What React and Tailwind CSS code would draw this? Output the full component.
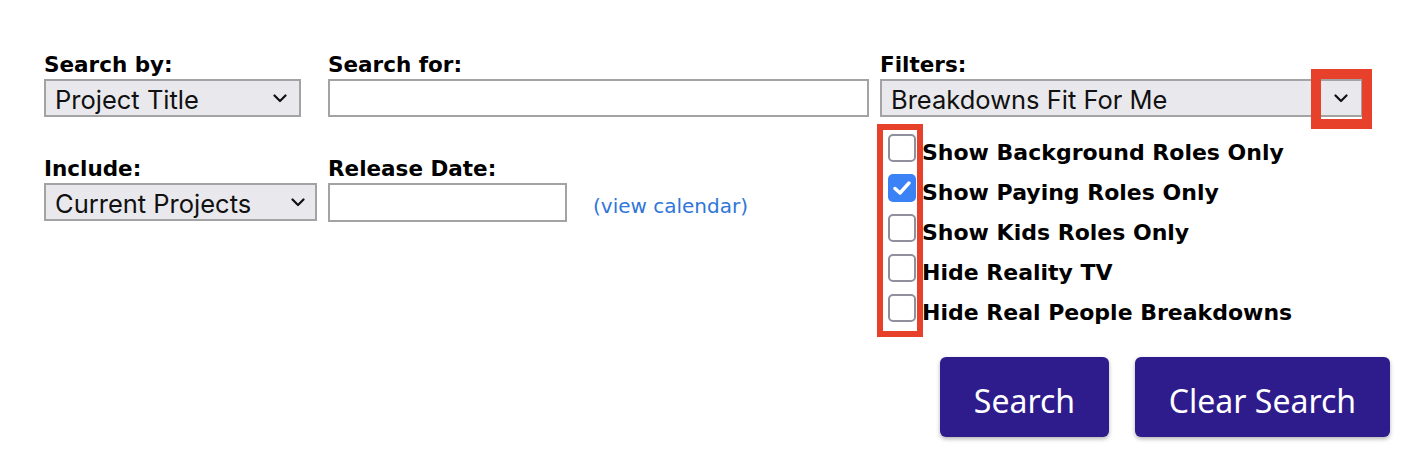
import { useState } from 'react'

const labelFont = "font-['DejaVu_Sans',Verdana,sans-serif]"

function Chevron() {
  return (
    <svg width="14" height="9" viewBox="0 0 14 9" className="shrink-0">
      <polyline points="1.5,1.5 7,7 12.5,1.5" fill="none" stroke="#111" strokeWidth="2.2" strokeLinecap="round" strokeLinejoin="round" />
    </svg>
  )
}

function FakeSelect({ value, width, pr = 'pr-[11px]' }) {
  return (
    <div
      className={`h-[38px] border-2 border-[#a3a3a3] bg-[#e9e9ed] flex items-center justify-between pl-[9px] ${pr} font-['Inter',sans-serif] text-[25.5px] text-[#111] ${width}`}
    >
      <span className="leading-none pt-[3px]">{value}</span>
      <Chevron />
    </div>
  )
}

function Label({ children }) {
  return (
    <div className={`${labelFont} font-bold text-[21.5px] leading-[24px] text-black mb-[2px]`}>
      {children}
    </div>
  )
}

const filters = [
  'Show Background Roles Only',
  'Show Paying Roles Only',
  'Show Kids Roles Only',
  'Hide Reality TV',
  'Hide Real People Breakdowns',
]

export default function App() {
  const [checked, setChecked] = useState([false, true, false, false, false])

  const toggle = (i) => {
    setChecked((c) => c.map((v, j) => (j === i ? !v : v)))
  }

  return (
    <div className="w-[1414px] h-[464px] bg-white relative overflow-hidden">
      <div className="flex pt-[53px] pl-[44px]">
        {/* Left part: search fields */}
        <div className="w-[836px] flex flex-col gap-[40px]">
          <div className="grid grid-cols-[284px_1fr]">
            <div>
              <Label>Search by:</Label>
              <FakeSelect value="Project Title" width="w-[257px]" pr="pr-[12px]" />
            </div>
            <div>
              <Label>Search for:</Label>
              <div className="h-[38px] w-[541px] border-2 border-[#a3a3a3] bg-white" />
            </div>
          </div>
          <div className="grid grid-cols-[284px_1fr]">
            <div>
              <Label>Include:</Label>
              <FakeSelect value="Current Projects" width="w-[273px]" pr="pr-[10px]" />
            </div>
            <div>
              <Label>Release Date:</Label>
              <div className="flex items-center">
                <div className="h-[39px] w-[239px] border-2 border-[#a3a3a3] bg-white" />
                <a href="#" className={`ml-[26px] mt-[7px] ${labelFont} text-[20px] text-[#2f76d8]`}>
                  (view calendar)
                </a>
              </div>
            </div>
          </div>
        </div>

        {/* Right part: filters */}
        <div className="w-[510px] flex flex-col">
          <Label>Filters:</Label>
          <div className="relative">
            <FakeSelect value="Breakdowns Fit For Me" width="w-[483px]" pr="pr-[13px]" />
            {/* highlight around dropdown arrow */}
            <div className="absolute left-[431px] top-[-10px] w-[61px] h-[60px] border-[10px] border-[#e8412b] pointer-events-none" />
          </div>

          <div className="relative mt-[17px] flex flex-col">
            {filters.map((f, i) => (
              <label key={f} className="flex items-start h-[40px] cursor-pointer" onClick={() => toggle(i)}>
                <span
                  className={`ml-[8px] w-[28px] h-[28px] rounded-[5px] flex items-center justify-center shrink-0 ${
                    checked[i] ? 'bg-[#3b82f6]' : 'border-2 border-[#8f8f9d] bg-white'
                  }`}
                >
                  {checked[i] && (
                    <svg width="18" height="14" viewBox="0 0 18 14">
                      <polyline points="2,7.5 7,12 16,2" fill="none" stroke="white" strokeWidth="3.4" strokeLinecap="round" strokeLinejoin="round" />
                    </svg>
                  )}
                </span>
                <span className={`ml-[6px] ${labelFont} font-bold text-[22px] leading-[38px] text-black whitespace-nowrap`}>
                  {f}
                </span>
              </label>
            ))}
            {/* highlight around checkboxes */}
            <div className="absolute left-[-3px] top-[-10px] w-[46px] h-[213px] border-[6px] border-[#e8412b] pointer-events-none" />
          </div>

          <div className="flex gap-[26px] ml-[60px] mt-[23px]">
            <button className="w-[169px] h-[80px] pt-[7px] rounded-[6px] bg-[#2e1c8c] text-white font-['Noto_Sans',sans-serif] text-[32px] shadow-[0_2px_4px_rgba(0,0,0,0.3)]">
              Search
            </button>
            <button className="w-[255px] h-[80px] pt-[7px] rounded-[6px] bg-[#2e1c8c] text-white font-['Noto_Sans',sans-serif] text-[32px] shadow-[0_2px_4px_rgba(0,0,0,0.3)]">
              Clear Search
            </button>
          </div>
        </div>
      </div>
    </div>
  )
}
